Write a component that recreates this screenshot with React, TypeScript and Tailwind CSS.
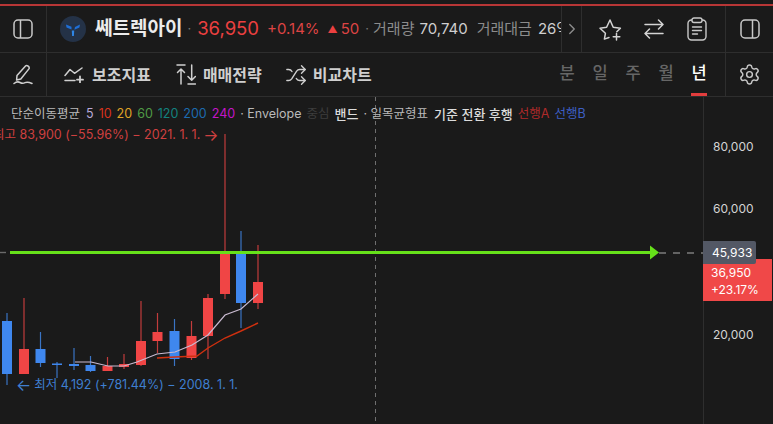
import { ChevronRight, Settings, Shuffle } from "lucide-react";

const candles = [
  { x: 7, top: 313, bottom: 385, bodyTop: 321, bodyBottom: 374, up: false },
  { x: 24, top: 298, bottom: 374, bodyTop: 349, bodyBottom: 374, up: true },
  { x: 40.5, top: 332, bottom: 367, bodyTop: 349, bodyBottom: 363, up: false },
  { x: 57, top: 362, bottom: 378, bodyTop: 363.5, bodyBottom: 365, up: false },
  { x: 74, top: 348, bottom: 370, bodyTop: 364, bodyBottom: 366, up: false },
  { x: 90.5, top: 356, bottom: 372, bodyTop: 365, bodyBottom: 371, up: false },
  { x: 107.5, top: 357, bottom: 371, bodyTop: 366, bodyBottom: 371, up: true },
  { x: 124, top: 354, bottom: 369, bodyTop: 364, bodyBottom: 367, up: true },
  { x: 141, top: 301, bottom: 366, bodyTop: 341, bodyBottom: 365, up: true },
  { x: 157.5, top: 313, bottom: 353, bodyTop: 332, bodyBottom: 341, up: true },
  { x: 174.5, top: 319, bottom: 366, bodyTop: 331, bodyBottom: 359, up: false },
  { x: 191.5, top: 321, bottom: 360, bodyTop: 336, bodyBottom: 358, up: true },
  { x: 208, top: 294, bottom: 359, bodyTop: 298, bodyBottom: 336, up: true },
  { x: 225, top: 134, bottom: 299, bodyTop: 253, bodyBottom: 294, up: true },
  { x: 241, top: 231, bottom: 328, bodyTop: 253, bodyBottom: 303, up: false },
  { x: 258, top: 245, bottom: 309, bodyTop: 282, bodyBottom: 303, up: true },
];

const maColors = [
  ["5", "ml-px text-[#b9a9d8]"],
  ["10", "text-[#d8331c]"],
  ["20", "text-[#e0a526]"],
  ["60", "text-[#4f9a45]"],
  ["120", "text-[#13827f]"],
  ["200", "text-[#1c6bb0]"],
  ["240", "text-[#c415c9]"],
];

const periods = ["분", "일", "주", "월", "년"];

function PanelIcon({ side }: { side: "left" | "right" }) {
  return (
    <svg width="20" height="20" viewBox="0 0 20 20" fill="none" stroke="#c9c9c9" strokeWidth="1.5">
      <rect x="1" y="1" width="18" height="18" rx="4" />
      <path d={side === "left" ? "M7.5 1v18" : "M12.5 1v18"} />
    </svg>
  );
}

function Logo() {
  return (
    <svg className="shrink-0" width="26" height="26" viewBox="0 0 26 26">
      <circle cx="13" cy="13" r="13" fill="#243247" />
      <path d="M6 8.5l5.5 2.2 0 2.8L6.5 11.5z" fill="#1f6fd6" />
      <path d="M20 8.5l-5 2.6-.6 2.6 5-2.2z" fill="#1f6fd6" />
      <path d="M11.8 14.5l2.4 0-.3 5.5-1.8 0z" fill="#2f86e6" />
    </svg>
  );
}

function StarPlus() {
  return (
    <svg width="24" height="24" viewBox="0 0 24 24" fill="none" stroke="#d4d4d4" strokeWidth="1.5" strokeLinejoin="round" strokeLinecap="round">
      <path d="M11 20.5l-4.6 1.6 1-5.8L2 11.2l6.6-.9L12 3l3.2 7.3 7.2.9-3.6 3.6" />
      <path d="M18.5 16.5v6.5M15.2 19.8h6.6" />
    </svg>
  );
}

function SwapIcon() {
  return (
    <svg width="20" height="20" viewBox="0 0 20 20" fill="none" stroke="#d4d4d4" strokeWidth="1.5" strokeLinecap="round" strokeLinejoin="round">
      <path d="M1 5.5h18M14.5 1L19 5.5 14.5 10" />
      <path d="M19 14.5H1M5.5 10L1 14.5 5.5 19" />
    </svg>
  );
}

function ClipboardIcon() {
  return (
    <svg className="ml-px" width="20" height="24" viewBox="0 0 20 24" fill="none" stroke="#c9c9c9" strokeWidth="1.4" strokeLinecap="round">
      <rect x="1" y="3" width="18" height="20" rx="3.5" />
      <rect x="5" y="1" width="10" height="4.5" rx="2" fill="#1a1a1a" />
      <path d="M5.5 10h9M5.5 13.5h9M5.5 17h5" />
    </svg>
  );
}

function PenIcon() {
  return (
    <svg width="20" height="21" viewBox="0 0 20 21" fill="none" stroke="#cfcfcf" strokeWidth="1.5" strokeLinecap="round" strokeLinejoin="round">
      <path d="M4 11.5L12.5 2c1.4-1.5 4.6 1 3.4 2.9L7.8 15 3.6 16z" />
      <path d="M1 19.5c2.5-2 4-2.2 6-1s3 1.3 5 .2 4-.6 7 .8" />
    </svg>
  );
}

function IndicatorIcon() {
  return (
    <svg width="20" height="16" viewBox="0 0 20 16" fill="none" stroke="#cfcfcf" strokeWidth="1.5" strokeLinecap="round" strokeLinejoin="round">
      <path d="M1 8.5L6 2.5l4.5 3.8L18 1" />
      <path d="M1 13.5h10" />
      <path d="M16 9.5v6M13 12.7h6" strokeWidth="1.8" />
    </svg>
  );
}

function StrategyIcon() {
  return (
    <svg width="20" height="21" viewBox="0 0 20 21" fill="none" stroke="#cfcfcf" strokeWidth="1.5" strokeLinecap="round" strokeLinejoin="round">
      <path d="M1 1h8M5 5v15M1.5 8.5L5 5l3.5 3.5" />
      <path d="M12 20h7.5M15.7 1v15M12 12.5l3.7 3.7 3.7-3.7" />
    </svg>
  );
}

function ChartDrawing() {
  return (
    <svg className="absolute left-0 top-0" width="703" height="327" viewBox="0 97 703 327" fill="none">
      <path d="M0 252.5h10" stroke="#6a6a6a" strokeWidth="1.4" strokeDasharray="6 5" />
      <path d="M659 253h44" stroke="#7c7c7c" strokeWidth="1.4" strokeDasharray="7 7" />
      <path d="M375.5 97v327" stroke="#6f6f6f" strokeDasharray="4 4" />
      {candles.map((c) => {
        const color = c.up ? "#f04545" : "#3f87ee";
        const wick = c.up ? "#c23c3c" : "#3a74c4";
        return (
          <g key={c.x}>
            <path d={`M${c.x} ${c.top}V${c.bottom}`} stroke={wick} strokeWidth="1.2" />
            <rect x={c.x - 5} y={c.bodyTop} width="10" height={c.bodyBottom - c.bodyTop} fill={color} />
          </g>
        );
      })}
      <path
        d="M75 362L91 362 108 366 124 366 137 362 157 354 175 352 192 345 208 335 225 315 241 309 258 294"
        stroke="#c9bad0"
        strokeWidth="1.2"
      />
      <path d="M157 358L175 357 197 356 208 348 225 338 241 331 258 323" stroke="#d0300f" strokeWidth="1.4" />
      <path d="M10 252.5H652" stroke="#66e01a" strokeWidth="3" />
      <path d="M650 245.5L659 252.5 650 259.5z" fill="#66e01a" />
    </svg>
  );
}

export default function App() {
  return (
    <div className="flex h-[424px] w-[773px] flex-col overflow-hidden bg-[#1a1a1a] font-['Inter','Noto_Sans_CJK_KR',sans-serif] text-[#d0d0d0]">
      <div className="mt-1 h-[2px] shrink-0 bg-[#b83636]" />

      <header className="flex h-[47px] shrink-0 items-stretch border-b border-[#2e2e2e]">
        <div className="flex w-[47px] shrink-0 items-center justify-center border-r border-[#2e2e2e]">
          <PanelIcon side="left" />
        </div>
        <div className="flex min-w-0 flex-1 items-center overflow-hidden whitespace-nowrap pl-[13px]">
          <Logo />
          <span className="ml-[9px] text-[19px] font-bold text-[#ececec]">쎄트렉아이</span>
          <span className="ml-[5px] text-[13px] text-[#777]">·</span>
          <span className="ml-[6px] text-[18.5px] font-normal text-[#ec4040]">36,950</span>
          <span className="ml-[8px] text-[15px] text-[#dd4444]">+0.14%</span>
          <span className="ml-[8px] mt-px text-[10px] text-[#ec4040]">▲</span>
          <span className="ml-[3px] text-[15px] text-[#dd4444]">50</span>
          <span className="ml-[6px] text-[13px] text-[#777]">·</span>
          <span className="ml-[4px] text-[15px] text-[#8c8c8c]">거래량</span>
          <span className="ml-[5px] text-[15px] text-[#cfcfcf]">70,740</span>
          <span className="ml-[9px] text-[15px] text-[#8c8c8c]">거래대금</span>
          <span className="ml-[6px] text-[15px] text-[#cfcfcf]">26억</span>
        </div>
        <div className="flex w-[21px] shrink-0 items-center justify-center border-x border-[#2e2e2e] text-[#8c8c8c]">
          <ChevronRight size={18} strokeWidth={1.8} />
        </div>
        <div className="flex w-[143px] shrink-0 items-center gap-[22px] pl-[16px]">
          <StarPlus />
          <SwapIcon />
          <ClipboardIcon />
        </div>
        <div className="flex w-[48px] shrink-0 items-center justify-center border-l border-[#2e2e2e]">
          <PanelIcon side="right" />
        </div>
      </header>

      <nav className="flex h-[44px] shrink-0 items-stretch border-b border-[#2e2e2e]">
        <div className="flex w-[47px] shrink-0 items-center justify-center border-r border-[#2e2e2e]">
          <PenIcon />
        </div>
        <div className="flex flex-1 items-center whitespace-nowrap pl-[17px] text-[16px] font-semibold text-[#cfcfcf]">
          <IndicatorIcon />
          <span className="ml-[8px]">보조지표</span>
          <span className="ml-[25px]">
            <StrategyIcon />
          </span>
          <span className="ml-[7px]">매매전략</span>
          <Shuffle className="ml-[23px]" size={22} strokeWidth={1.5} />
          <span className="ml-[6px]">비교차트</span>
        </div>
        <div className="flex items-stretch gap-[17px] pr-[18px]">
          {periods.map((p) => (
            <div
              key={p}
              className={`flex w-[16px] items-center justify-center border-b-[3px] text-[16.5px] font-medium ${
                p === "년" ? "border-[#e23d3d] font-bold text-white" : "border-transparent text-[#666]"
              }`}
            >
              {p}
            </div>
          ))}
        </div>
        <div className="flex w-[48px] shrink-0 items-center justify-center border-l border-[#2e2e2e]">
          <Settings size={23} strokeWidth={1.5} color="#c9c9c9" />
        </div>
      </nav>

      <main className="flex min-h-0 flex-1">
        <section className="relative w-[703px] shrink-0 overflow-hidden">
          <ChartDrawing />
          <div className="absolute left-[11px] top-[8px] flex items-center gap-[5px] whitespace-nowrap text-[12.5px] leading-[18px]">
            <span className="text-[#b9b9b9]">단순이동평균</span>
            {maColors.map(([label, color]) => (
              <span key={label} className={color}>
                {label}
              </span>
            ))}
            <span className="text-[#b9b9b9]">· Envelope</span>
            <span className="text-[#3d3d3d]">중심</span>
            <span className="text-[13px] font-medium text-[#dcdcdc]">밴드</span>
            <span className="text-[#b9b9b9]">· 일목균형표</span>
            <span className="ml-px text-[13px] font-medium text-[#dcdcdc]">기준 전환 후행</span>
            <span className="text-[#b02a2a]">선행A</span>
            <span className="text-[#3d5fc4]">선행B</span>
          </div>
          <div className="absolute left-[-7px] top-[29px] flex items-center gap-[3px] whitespace-nowrap text-[12.5px] leading-[18px] text-[#cf4040]">
            <span>최고 83,900 (−55.96%) − 2021. 1. 1.</span>
            <span className="text-[16px] leading-[18px]">→</span>
          </div>
          <div className="absolute left-[16px] top-[279px] flex items-center gap-[3px] whitespace-nowrap text-[12.5px] leading-[18px] text-[#3f7fd0]">
            <span className="text-[16px] leading-[18px]">←</span>
            <span>최저 4,192 (+781.44%) − 2008. 1. 1.</span>
          </div>
        </section>

        <aside className="relative flex-1 border-l border-[#2e2e2e] text-[12px] text-[#d4d4d4]">
          <span className="absolute left-[9px] top-[41px] leading-[18px]">80,000</span>
          <span className="absolute left-[9px] top-[103px] leading-[18px]">60,000</span>
          <span className="absolute left-[9px] top-[229px] leading-[18px]">20,000</span>
          <div className="absolute left-[-1px] top-[162px] w-[69px] bg-[#f04848] pb-[3px] pl-[8px] pt-[5px] leading-[17px] text-white">
            36,950
            <br />
            +23.17%
          </div>
          <div className="absolute left-[-1px] top-[144px] h-[23px] w-[53px] rounded-r-[2px] bg-[#535865] pl-[9px] leading-[24px] text-white">
            45,933
          </div>
        </aside>
      </main>
    </div>
  );
}
